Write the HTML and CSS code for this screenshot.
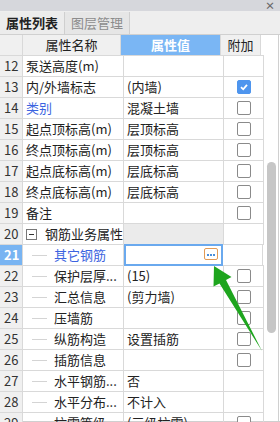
FILE: index.html
```html
<!DOCTYPE html>
<html>
<head>
    <meta charset="UTF-8" />
    <title>属性列表</title>
    <link rel="stylesheet" href="styles.css">
</head>
<body>

    <div class="panel">
        <div class="titlebar"><span class="close">×</span></div>

        <div class="tabs">
            <div class="tab active">属性列表</div>
            <div class="tab">图层管理</div>
        </div>

        <div class="body">
            <div class="grid">
                <div class="row head">
                    <div class="num"></div>
                    <div class="name center">属性名称</div>
                    <div class="value center sel">属性值</div>
                    <div class="add center">附加</div>
                </div>

                <div class="row">
                    <div class="num">12</div>
                    <div class="name">泵送高度(m)</div>
                    <div class="value"></div>
                    <div class="add"></div>
                </div>
                <div class="row">
                    <div class="num">13</div>
                    <div class="name">内/外墙标志</div>
                    <div class="value">(内墙)</div>
                    <div class="add"><span class="check on"><svg width="10" height="10" viewBox="0 0 10 10"><polyline points="2,5.2 4.2,7.3 8,2.8" fill="none" stroke="#fff" stroke-width="1.8"/></svg></span></div>
                </div>
                <div class="row">
                    <div class="num">14</div>
                    <div class="name link">类别</div>
                    <div class="value">混凝土墙</div>
                    <div class="add"><span class="check"></span></div>
                </div>
                <div class="row">
                    <div class="num">15</div>
                    <div class="name">起点顶标高(m)</div>
                    <div class="value">层顶标高</div>
                    <div class="add"><span class="check"></span></div>
                </div>
                <div class="row">
                    <div class="num">16</div>
                    <div class="name">终点顶标高(m)</div>
                    <div class="value">层顶标高</div>
                    <div class="add"><span class="check"></span></div>
                </div>
                <div class="row">
                    <div class="num">17</div>
                    <div class="name">起点底标高(m)</div>
                    <div class="value">层底标高</div>
                    <div class="add"><span class="check"></span></div>
                </div>
                <div class="row">
                    <div class="num">18</div>
                    <div class="name">终点底标高(m)</div>
                    <div class="value">层底标高</div>
                    <div class="add"><span class="check"></span></div>
                </div>
                <div class="row">
                    <div class="num">19</div>
                    <div class="name">备注</div>
                    <div class="value"></div>
                    <div class="add"><span class="check"></span></div>
                </div>
                <div class="row">
                    <div class="num">20</div>
                    <div class="name group"><span class="toggle"></span>钢筋业务属性</div>
                    <div class="value grey"></div>
                    <div class="add"></div>
                </div>
                <div class="row">
                    <div class="num current">21</div>
                    <div class="name child link"><span class="branch"></span>其它钢筋</div>
                    <div class="value editing">
                        <span class="more"><svg width="12" height="9" viewBox="0 0 12 9"><rect x="2" y="4" width="2" height="2" fill="#4a8fdc"/><rect x="5" y="4" width="2" height="2" fill="#4a8fdc"/><rect x="8" y="4" width="2" height="2" fill="#4a8fdc"/></svg></span>
                    </div>
                    <div class="add"></div>
                </div>
                <div class="row">
                    <div class="num">22</div>
                    <div class="name child"><span class="branch"></span>保护层厚...</div>
                    <div class="value">(15)</div>
                    <div class="add"><span class="check"></span></div>
                </div>
                <div class="row">
                    <div class="num">23</div>
                    <div class="name child"><span class="branch"></span>汇总信息</div>
                    <div class="value">(剪力墙)</div>
                    <div class="add"><span class="check"></span></div>
                </div>
                <div class="row">
                    <div class="num">24</div>
                    <div class="name child"><span class="branch"></span>压墙筋</div>
                    <div class="value"></div>
                    <div class="add"><span class="check"></span></div>
                </div>
                <div class="row">
                    <div class="num">25</div>
                    <div class="name child"><span class="branch"></span>纵筋构造</div>
                    <div class="value">设置插筋</div>
                    <div class="add"><span class="check"></span></div>
                </div>
                <div class="row">
                    <div class="num">26</div>
                    <div class="name child"><span class="branch"></span>插筋信息</div>
                    <div class="value"></div>
                    <div class="add"><span class="check"></span></div>
                </div>
                <div class="row">
                    <div class="num">27</div>
                    <div class="name child"><span class="branch"></span>水平钢筋...</div>
                    <div class="value">否</div>
                    <div class="add"></div>
                </div>
                <div class="row">
                    <div class="num">28</div>
                    <div class="name child"><span class="branch"></span>水平分布...</div>
                    <div class="value">不计入</div>
                    <div class="add"></div>
                </div>
                <div class="row">
                    <div class="num">29</div>
                    <div class="name child"><span class="branch"></span>抗震等级</div>
                    <div class="value">(三级抗震)</div>
                    <div class="add"><span class="check"></span></div>
                </div>
            </div>

            <div class="scrollbar"><div class="thumb"></div></div>
        </div>

        <!-- callout arrow pointing at the ... button -->
        <svg class="arrow" width="280" height="422" viewBox="0 0 280 422">
            <polygon points="214,266 231.5,277 226,280 262,351 219.5,283.5 213.5,286.5" fill="#1ea51e"/>
        </svg>
    </div>

</body>
</html>
```

FILE: styles.css
```css
body {
    margin: 0;
    font-family: "Noto Sans CJK SC", "Noto Sans", sans-serif;
    font-size: 13px;
    color: #222222;
    background-color: #ffffff;
}

div.panel {
    position: relative;
    width: 280px;
    height: 422px;
    overflow: hidden;
    background-color: #ffffff;
}

div.titlebar {
    height: 11px;
    background-color: #d6d7dc;
    display: flex;
    justify-content: flex-end;
    align-items: center;
}

span.close {
    font-size: 10px;
    line-height: 10px;
    font-weight: bold;
    color: #666666;
    margin-right: 5px;
}

div.tabs {
    display: flex;
    height: 23px;
    background-color: #eeeeee;
    border-bottom: 1px solid #d0d0d0;
}

div.tab {
    height: 22px;
    line-height: 22px;
    padding: 0 6px;
    margin-top: 1px;
    font-size: 13px;
    color: #8c8c8c;
    background-color: #e6e6e6;
    border-right: 1px solid #cfcfcf;
}

div.tab.active {
    color: #222222;
    font-weight: bold;
    background-color: #ececec;
    width: 52px;
}

div.body {
    display: flex;
    height: 386px;
    border-bottom: 1px solid #cfcfcf;
}

div.grid {
    width: 264px;
}

div.row {
    display: flex;
    height: 20px;
    border-bottom: 1px solid #d9d9d9;
}

div.row > div {
    border-right: 1px solid #d9d9d9;
    line-height: 20px;
    white-space: nowrap;
    overflow: hidden;
}

div.num {
    width: 18px;
    padding-left: 4px;
    background-color: #f0f0f0;
    color: #333333;
}

div.name {
    width: 97px;
    padding-left: 3px;
    display: flex;
    align-items: center;
}

div.value {
    width: 96px;
    padding-left: 3px;
    position: relative;
}

div.add {
    width: 39px;
    display: flex;
    align-items: center;
    justify-content: center;
}

div.row.head > div {
    background-color: #f0f0f0;
}

div.row.head > div.center {
    padding-left: 0;
    justify-content: center;
    text-align: center;
}

div.row.head > div.sel {
    width: 99px;
    background-color: #7ab6f4;
    color: #ffffff;
    font-weight: bold;
}

div.name.link {
    color: #3b63e0;
}

div.value.grey {
    background-color: #ebebeb;
}

div.num.current {
    background-color: #78b4f2;
    color: #ffffff;
    font-weight: bold;
}

div.value.editing {
    width: 95px;
    padding-left: 0;
    border: 2px solid #6aa9ee;
    margin: -1px 0;
    height: 18px;
}

span.more {
    position: absolute;
    right: 3px;
    top: 2px;
    display: flex;
    align-items: center;
    justify-content: center;
    width: 12px;
    height: 10px;
    border: 1px solid #e29a55;
    border-radius: 2px;
    background-color: #ffffff;
}

span.toggle {
    position: relative;
    display: inline-block;
    width: 9px;
    height: 9px;
    border: 1px solid #777777;
    margin: 0 8px 0 0;
}

span.toggle::after {
    content: "";
    position: absolute;
    left: 2px;
    top: 4px;
    width: 5px;
    height: 1px;
    background-color: #333333;
}

div.name.child {
    padding-left: 9px;
    width: 91px;
}

span.branch {
    display: inline-block;
    width: 15px;
    height: 1px;
    background-color: #d4d4d4;
    margin-right: 7px;
}

span.check {
    display: flex;
    align-items: center;
    justify-content: center;
    width: 12px;
    height: 12px;
    border: 1px solid #8a8a8a;
    border-radius: 2px;
    background-color: #ffffff;
}

span.check.on {
    background-color: #4e95ee;
    border-color: #4e95ee;
}

div.scrollbar {
    width: 15px;
    background-color: #ffffff;
    border-right: 1px solid #d0d0d0;
    padding-top: 127px;
    box-sizing: border-box;
}

div.thumb {
    width: 9px;
    height: 171px;
    margin-left: 3px;
    background-color: #c6c6c6;
    border-radius: 5px;
}

svg.arrow {
    position: absolute;
    left: 0;
    top: 0;
    pointer-events: none;
}
```
